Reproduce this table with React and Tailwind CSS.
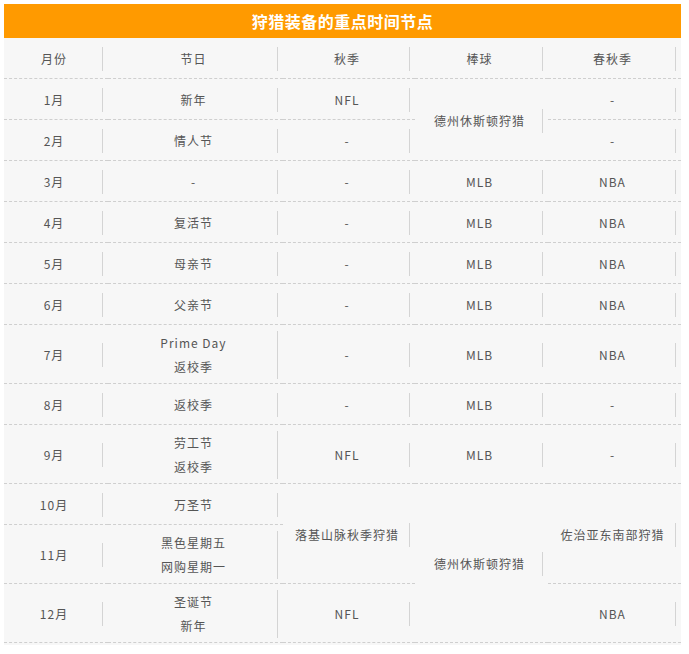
import React from 'react';

const font = { fontFamily: '"Noto Sans CJK SC", "Noto Sans", sans-serif' };

// [col, row, colSpan, rowSpan, lines]
const cells = [
  // header
  [1, 1, 1, 1, ['月份']],
  [2, 1, 1, 1, ['节日']],
  [3, 1, 1, 1, ['秋季']],
  [4, 1, 1, 1, ['棒球']],
  [5, 1, 1, 1, ['春秋季']],
  // 1-2月
  [1, 2, 1, 1, ['1月']],
  [2, 2, 1, 1, ['新年']],
  [3, 2, 1, 1, ['NFL']],
  [4, 2, 1, 2, ['德州休斯顿狩猎']],
  [5, 2, 1, 1, ['-']],
  [1, 3, 1, 1, ['2月']],
  [2, 3, 1, 1, ['情人节']],
  [3, 3, 1, 1, ['-']],
  [5, 3, 1, 1, ['-']],
  // 3-9月
  [1, 4, 1, 1, ['3月']],
  [2, 4, 1, 1, ['-']],
  [3, 4, 1, 1, ['-']],
  [4, 4, 1, 1, ['MLB']],
  [5, 4, 1, 1, ['NBA']],
  [1, 5, 1, 1, ['4月']],
  [2, 5, 1, 1, ['复活节']],
  [3, 5, 1, 1, ['-']],
  [4, 5, 1, 1, ['MLB']],
  [5, 5, 1, 1, ['NBA']],
  [1, 6, 1, 1, ['5月']],
  [2, 6, 1, 1, ['母亲节']],
  [3, 6, 1, 1, ['-']],
  [4, 6, 1, 1, ['MLB']],
  [5, 6, 1, 1, ['NBA']],
  [1, 7, 1, 1, ['6月']],
  [2, 7, 1, 1, ['父亲节']],
  [3, 7, 1, 1, ['-']],
  [4, 7, 1, 1, ['MLB']],
  [5, 7, 1, 1, ['NBA']],
  [1, 8, 1, 1, ['7月']],
  [2, 8, 1, 1, ['Prime Day', '返校季']],
  [3, 8, 1, 1, ['-']],
  [4, 8, 1, 1, ['MLB']],
  [5, 8, 1, 1, ['NBA']],
  [1, 9, 1, 1, ['8月']],
  [2, 9, 1, 1, ['返校季']],
  [3, 9, 1, 1, ['-']],
  [4, 9, 1, 1, ['MLB']],
  [5, 9, 1, 1, ['-']],
  [1, 10, 1, 1, ['9月']],
  [2, 10, 1, 1, ['劳工节', '返校季']],
  [3, 10, 1, 1, ['NFL']],
  [4, 10, 1, 1, ['MLB']],
  [5, 10, 1, 1, ['-']],
  // 10-12月
  [1, 11, 1, 1, ['10月']],
  [2, 11, 1, 1, ['万圣节']],
  [3, 11, 1, 2, ['落基山脉秋季狩猎']],
  [4, 11, 1, 3, ['德州休斯顿狩猎']],
  [5, 11, 1, 2, ['佐治亚东南部狩猎']],
  [1, 12, 1, 1, ['11月']],
  [2, 12, 1, 1, ['黑色星期五', '网购星期一']],
  [1, 13, 1, 1, ['12月']],
  [2, 13, 1, 1, ['圣诞节', '新年']],
  [3, 13, 1, 1, ['NFL']],
  [5, 13, 1, 1, ['NBA']],
];

function Cell({ col, row, rowSpan, lines }) {
  return (
    <div
      className="flex items-center pt-[2px] pr-[5px] border-b border-dashed border-[#cfcfcf]"
      style={{ gridColumn: `${col} / span 1`, gridRow: `${row} / span ${rowSpan}` }}
    >
      <div className="w-full border-r border-[#d4d4d4] pl-[2px] text-center text-[12px] leading-[24px] tracking-[1px] text-[#555555]">
        {lines.map((l, i) => (
          <div key={i}>{l}</div>
        ))}
      </div>
    </div>
  );
}

export default function App() {
  return (
    <div className="bg-white min-h-screen pt-[4px] pl-[4px]" style={font}>
      <div className="w-[677px] bg-[#f7f7f7] pb-[2px]">
        <div className="h-[34px] bg-[#ff9a00] flex items-center justify-center text-white text-[16px] font-semibold tracking-[0.5px]">
          狩猎装备的重点时间节点
        </div>
        <div className="grid grid-cols-[104px_175px_132px_133px_133px] grid-rows-[41px_41px_41px_41px_41px_41px_41px_59px_41px_59px_41px_59px_59px]">
          {cells.map(([col, row, , rowSpan, lines], i) => (
            <Cell key={i} col={col} row={row} rowSpan={rowSpan} lines={lines} />
          ))}
        </div>
      </div>
    </div>
  );
}
